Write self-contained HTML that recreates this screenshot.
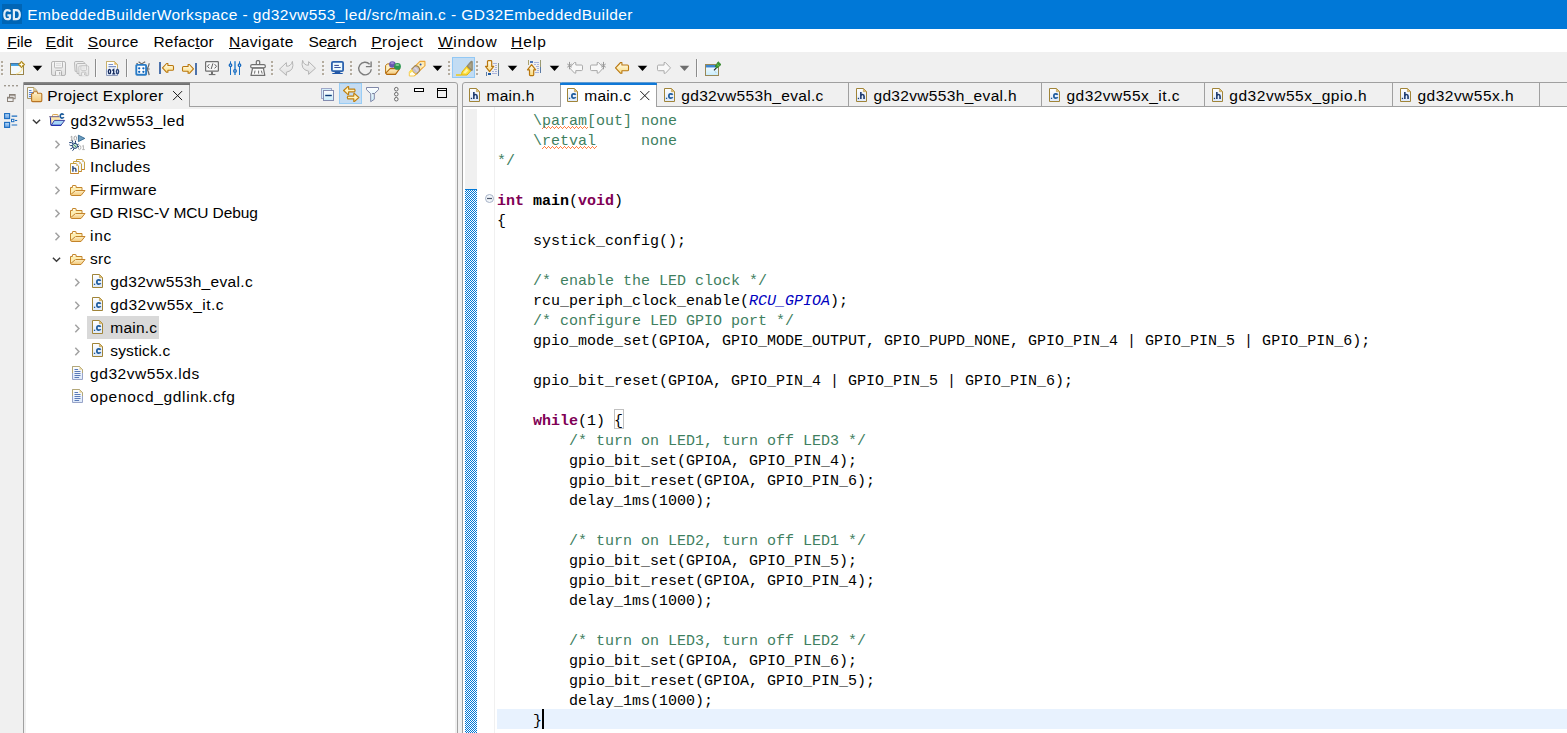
<!DOCTYPE html>
<html><head><meta charset="utf-8"><title>GD32EmbeddedBuilder</title>
<style>
html,body{margin:0;padding:0;overflow:hidden;}
body{width:1567px;height:733px;overflow:hidden;position:relative;background:#f0f0f0;font:16px "Liberation Sans",sans-serif;color:#000;}
.a{position:absolute;}
.t{position:absolute;white-space:pre;line-height:20px;height:20px;font:15.5px "Liberation Sans",sans-serif;}
.t u{text-decoration:underline;text-decoration-thickness:1px;text-underline-offset:0.5px;}
#titlebar{left:0;top:0;width:1567px;height:29px;background:#0078d7;}
#menubar{left:0;top:29px;width:1567px;height:23px;background:#fff;}
#toolbar{left:0;top:52px;width:1567px;height:30px;background:#f0f0f0;}
svg{position:absolute;overflow:visible;}
.code{position:absolute;left:497px;top:109px;margin:0;font:15px "Liberation Mono",monospace;line-height:20px;white-space:pre;color:#000;}
.code div{height:20px;}
.c{color:#3f7f5f;}
.k{color:#7f0055;font-weight:bold;}
.b{font-weight:bold;}
.m{color:#0000c0;font-style:italic;}
</style></head>
<body>
<div class="a" id="titlebar"></div>
<div class="a" id="menubar"></div>
<div class="a" id="toolbar"></div>

<div class="a" style="left:23px;top:82px;width:433px;height:660px;border:1px solid #a0a0a0;border-radius:0 3px 0 0"></div>
<div class="a" style="left:189px;top:106px;width:268px;height:1px;background:#a0a0a0"></div>
<div class="a" style="left:189px;top:84px;width:1px;height:23px;background:#a0a0a0"></div>
<div class="a" style="left:24px;top:82px;width:166px;height:3px;background:linear-gradient(#8c8c8c,#6a6a6a)"></div>
<div class="a" style="left:26px;top:109px;width:429px;height:624px;background:#fff"></div>
<div class="a" style="left:87px;top:316px;width:72px;height:23px;background:#d9d9d9"></div>
<div class="a" style="left:339px;top:83px;width:21px;height:19px;background:#c5dcf2;border:1px solid #99cdf5"></div>
<div class="a" style="left:462px;top:82px;width:1120px;height:660px;border:1px solid #a0a0a0;border-radius:3px 0 0 0"></div>
<div class="a" style="left:462px;top:106px;width:1105px;height:1px;background:#a0a0a0"></div>
<div class="a" style="left:463px;top:107px;width:1104px;height:626px;background:#fff"></div>
<div class="a" style="left:560px;top:82px;width:97px;height:25px;background:#fff;border-left:1px solid #a0a0a0;border-right:1px solid #a0a0a0;box-sizing:border-box"></div>
<div class="a" style="left:560px;top:82px;width:97px;height:3px;background:linear-gradient(#5f9ad0 0,#5f9ad0 1px,#0f78d7 1px);border-radius:2px 2px 0 0"></div>
<div class="a" style="left:848px;top:83px;width:1px;height:23px;background:#a0a0a0"></div>
<div class="a" style="left:1041px;top:83px;width:1px;height:23px;background:#a0a0a0"></div>
<div class="a" style="left:1204px;top:83px;width:1px;height:23px;background:#a0a0a0"></div>
<div class="a" style="left:1392px;top:83px;width:1px;height:23px;background:#a0a0a0"></div>
<div class="a" style="left:1539px;top:83px;width:1px;height:23px;background:#a0a0a0"></div>
<div class="a" style="left:465px;top:109px;width:12px;height:80px;background:#f0f0f0"></div>
<div class="a" style="left:465px;top:189px;width:12px;height:544px;background-color:#fff;background-image:conic-gradient(#0078d7 25%,#fff 0 50%,#0078d7 0 75%,#fff 0);background-size:2px 2px;background-position:0 1px"></div>
<div class="a" style="left:465px;top:189px;width:12px;height:1px;background:#0078d7"></div>
<div class="a" style="left:494px;top:107px;width:1px;height:626px;background:#f0f0f0"></div>
<div class="a" style="left:497px;top:709px;width:1070px;height:20px;background:#e8f2fe"></div>
<div class="a" style="left:542px;top:709px;width:2px;height:20px;background:#000"></div>
<div class="a" style="left:614px;top:409px;width:8px;height:18px;border:1px solid #c0c0c0"></div>
<svg class="a" style="left:0;top:0" width="1567" height="733" viewBox="0 0 1567 733"><defs>
<linearGradient id="gy" x1="0" y1="0" x2="0" y2="1"><stop offset="0" stop-color="#fffdf0"/><stop offset="1" stop-color="#fbdc80"/></linearGradient>
<linearGradient id="gf" x1="0" y1="0" x2="0" y2="1"><stop offset="0" stop-color="#fdf0c8"/><stop offset="1" stop-color="#f3c878"/></linearGradient>
<linearGradient id="gp" x1="0" y1="0" x2="0" y2="1"><stop offset="0" stop-color="#ffffff"/><stop offset="1" stop-color="#dde9fa"/></linearGradient>
<linearGradient id="gd" x1="0" y1="0" x2="0" y2="1"><stop offset="0" stop-color="#f6f6f6"/><stop offset="1" stop-color="#e0e0e0"/></linearGradient>
<linearGradient id="gc" x1="0" y1="0" x2="0" y2="1"><stop offset="0" stop-color="#ffffff"/><stop offset="1" stop-color="#c8ecfb"/></linearGradient>
<linearGradient id="gb" x1="0" y1="0" x2="0" y2="1"><stop offset="0" stop-color="#bcdcf8"/><stop offset="1" stop-color="#5f9be0"/></linearGradient>
</defs>
<rect x="2" y="4" width="20" height="20" fill="#0065b5"/>
<path d="M10.2 11.6 Q9.6 10.2 7.5 10.2 Q4.3 10.2 4.3 14.7 Q4.3 19.2 7.5 19.2 Q10 19.2 10 17.4 V15.4 H7.4" fill="none" stroke="#e2edf7" stroke-width="2.2"/>
<path d="M13.9 10.2 V19.2 H16 Q19.8 19.2 19.8 14.7 Q19.8 10.2 16 10.2 Z" fill="none" stroke="#e2edf7" stroke-width="2.2"/>
<rect x="1" y="61" width="2" height="2" fill="#b4ac9f"/>
<rect x="3" y="63" width="1" height="1" fill="#fafafa"/>
<rect x="1" y="65" width="2" height="2" fill="#b4ac9f"/>
<rect x="3" y="67" width="1" height="1" fill="#fafafa"/>
<rect x="1" y="69" width="2" height="2" fill="#b4ac9f"/>
<rect x="3" y="71" width="1" height="1" fill="#fafafa"/>
<rect x="1" y="73" width="2" height="2" fill="#b4ac9f"/>
<rect x="3" y="75" width="1" height="1" fill="#fafafa"/>
<rect x="271" y="61" width="2" height="2" fill="#b4ac9f"/>
<rect x="273" y="63" width="1" height="1" fill="#fafafa"/>
<rect x="271" y="65" width="2" height="2" fill="#b4ac9f"/>
<rect x="273" y="67" width="1" height="1" fill="#fafafa"/>
<rect x="271" y="69" width="2" height="2" fill="#b4ac9f"/>
<rect x="273" y="71" width="1" height="1" fill="#fafafa"/>
<rect x="271" y="73" width="2" height="2" fill="#b4ac9f"/>
<rect x="273" y="75" width="1" height="1" fill="#fafafa"/>
<rect x="322" y="61" width="2" height="2" fill="#b4ac9f"/>
<rect x="324" y="63" width="1" height="1" fill="#fafafa"/>
<rect x="322" y="65" width="2" height="2" fill="#b4ac9f"/>
<rect x="324" y="67" width="1" height="1" fill="#fafafa"/>
<rect x="322" y="69" width="2" height="2" fill="#b4ac9f"/>
<rect x="324" y="71" width="1" height="1" fill="#fafafa"/>
<rect x="322" y="73" width="2" height="2" fill="#b4ac9f"/>
<rect x="324" y="75" width="1" height="1" fill="#fafafa"/>
<rect x="350" y="61" width="2" height="2" fill="#b4ac9f"/>
<rect x="352" y="63" width="1" height="1" fill="#fafafa"/>
<rect x="350" y="65" width="2" height="2" fill="#b4ac9f"/>
<rect x="352" y="67" width="1" height="1" fill="#fafafa"/>
<rect x="350" y="69" width="2" height="2" fill="#b4ac9f"/>
<rect x="352" y="71" width="1" height="1" fill="#fafafa"/>
<rect x="350" y="73" width="2" height="2" fill="#b4ac9f"/>
<rect x="352" y="75" width="1" height="1" fill="#fafafa"/>
<rect x="378" y="61" width="2" height="2" fill="#b4ac9f"/>
<rect x="380" y="63" width="1" height="1" fill="#fafafa"/>
<rect x="378" y="65" width="2" height="2" fill="#b4ac9f"/>
<rect x="380" y="67" width="1" height="1" fill="#fafafa"/>
<rect x="378" y="69" width="2" height="2" fill="#b4ac9f"/>
<rect x="380" y="71" width="1" height="1" fill="#fafafa"/>
<rect x="378" y="73" width="2" height="2" fill="#b4ac9f"/>
<rect x="380" y="75" width="1" height="1" fill="#fafafa"/>
<rect x="448" y="61" width="2" height="2" fill="#b4ac9f"/>
<rect x="450" y="63" width="1" height="1" fill="#fafafa"/>
<rect x="448" y="65" width="2" height="2" fill="#b4ac9f"/>
<rect x="450" y="67" width="1" height="1" fill="#fafafa"/>
<rect x="448" y="69" width="2" height="2" fill="#b4ac9f"/>
<rect x="450" y="71" width="1" height="1" fill="#fafafa"/>
<rect x="448" y="73" width="2" height="2" fill="#b4ac9f"/>
<rect x="450" y="75" width="1" height="1" fill="#fafafa"/>
<rect x="476" y="61" width="2" height="2" fill="#b4ac9f"/>
<rect x="478" y="63" width="1" height="1" fill="#fafafa"/>
<rect x="476" y="65" width="2" height="2" fill="#b4ac9f"/>
<rect x="478" y="67" width="1" height="1" fill="#fafafa"/>
<rect x="476" y="69" width="2" height="2" fill="#b4ac9f"/>
<rect x="478" y="71" width="1" height="1" fill="#fafafa"/>
<rect x="476" y="73" width="2" height="2" fill="#b4ac9f"/>
<rect x="478" y="75" width="1" height="1" fill="#fafafa"/>
<rect x="95" y="59" width="1" height="18" fill="#8c8c8c"/>
<rect x="96" y="59" width="1" height="18" fill="#fafafa"/>
<rect x="126" y="59" width="1" height="18" fill="#8c8c8c"/>
<rect x="127" y="59" width="1" height="18" fill="#fafafa"/>
<rect x="696" y="59" width="1" height="18" fill="#8c8c8c"/>
<rect x="697" y="59" width="1" height="18" fill="#fafafa"/>
<path d="M32.699999999999996 65.8h9.6l-4.8 5.3z" fill="#000"/>
<path d="M432.7 65.8h9.6l-4.8 5.3z" fill="#000"/>
<path d="M507.7 65.8h9.6l-4.8 5.3z" fill="#000"/>
<path d="M549.6999999999999 65.8h9.6l-4.8 5.3z" fill="#000"/>
<path d="M637.6999999999999 65.8h9.6l-4.8 5.3z" fill="#000"/>
<path d="M679.6999999999999 65.8h9.6l-4.8 5.3z" fill="#6e6e6e"/>
<g transform="translate(10,61)"><rect x="0.5" y="2.5" width="13" height="11" fill="#f4fafd" stroke="#9a8448"/>
<rect x="1" y="3" width="9" height="2" fill="#45a4e4"/><rect x="0.5" y="2.2" width="9" height="1" fill="#2f74bc"/>
<path d="M6 13 Q11 12 12.5 7" fill="none" stroke="#fbe9a8" stroke-width="1.2"/>
<path d="M11.5 -0.2 L15.2 3.5 L11.5 7.2 L7.8 3.5Z" fill="#b08a1c"/>
<path d="M11.5 1 L12.3 2.7 L14 3.5 L12.3 4.3 L11.5 6 L10.7 4.3 L9 3.5 L10.7 2.7Z" fill="#fff8e0"/></g>
<g transform="translate(51,61)"><g transform="scale(1.0)"><rect x="0.5" y="0.5" width="14" height="14" rx="1.6" fill="url(#gd)" stroke="#b2b2b2"/>
<rect x="3.5" y="0.5" width="8" height="6.4" rx="1" fill="#f4f4f4" stroke="#b6b6b6"/>
<path d="M5 2.6h5M5 4.4h5" stroke="#d6d6d6" stroke-width="0.8"/>
<path d="M4.5 14.5v-4q0-1 1-1h4q1 0 1 1v4" fill="#f2f2f2" stroke="#b0b0b0"/>
<rect x="8" y="11" width="1.2" height="2.6" fill="#b8b8b8"/></g></g>
<g transform="translate(74,61)"><path d="M0.5 1.8q0-1.3 1.3-1.3h7.4l1.3 1.4v8.4h-9.4z" fill="#eeeeee" stroke="#b8b8b8"/>
<path d="M2.5 3.8q0-1.3 1.3-1.3h7.4l1.3 1.4v8.6h-9.4z" fill="#eeeeee" stroke="#b8b8b8"/></g>
<g transform="translate(78.5,65.5)"><g transform="scale(0.7)"><rect x="0.5" y="0.5" width="14" height="14" rx="1.6" fill="url(#gd)" stroke="#b2b2b2"/>
<rect x="3.5" y="0.5" width="8" height="6.4" rx="1" fill="#f4f4f4" stroke="#b6b6b6"/>
<path d="M5 2.6h5M5 4.4h5" stroke="#d6d6d6" stroke-width="0.8"/>
<path d="M4.5 14.5v-4q0-1 1-1h4q1 0 1 1v4" fill="#f2f2f2" stroke="#b0b0b0"/>
<rect x="8" y="11" width="1.2" height="2.6" fill="#b8b8b8"/></g></g>
<g transform="translate(106,61)"><path d="M0.5 0.5h8l3 3v11h-11z" fill="url(#gp)" stroke="#8f9cbc"/>
<path d="M0.5 8v-7.5h8l3 3v4" fill="none" stroke="#c8b06a"/>
<path d="M8.3 0.6v3.2h3.1z" fill="#e8b860"/>
<path d="M2.5 3.5h4.5" stroke="#7d93c8" stroke-width="1"/><path d="M2.5 5.7h7.5" stroke="#6079b4" stroke-width="1"/>
<ellipse cx="3.5" cy="10.6" rx="1.15" ry="2.1" fill="none" stroke="#14295c" stroke-width="1.3"/>
<path d="M6.2 9.6l1.5-1.1v4.4M6.3 12.9h2.9" fill="none" stroke="#14295c" stroke-width="1.3"/>
<ellipse cx="11.5" cy="10.6" rx="1.15" ry="2.1" fill="#c8d4e8" stroke="#2c4478" stroke-width="1.3"/></g>
<g transform="translate(135,61)"><path d="M3.6 0.7l3 2.2l3.6-2.2M1.4 2.6h1.4" stroke="#676767" stroke-width="1.1" fill="none"/>
<path d="M14.2 2.2q-0.4 3.2-1.8 5.4M12 8h2.6M12.4 8.6q1.2 2.2 1.8 5.6" stroke="#676767" stroke-width="1.2" fill="none"/>
<rect x="1.3" y="3.9" width="9.8" height="9.8" rx="0.8" fill="#fff" stroke="#2a7cc6" stroke-width="1.9"/>
<circle cx="4.2" cy="7.3" r="1.15" fill="#0a62bd"/><circle cx="8.4" cy="7.3" r="1.15" fill="#0a62bd"/>
<circle cx="4.2" cy="10.8" r="1.15" fill="#0a62bd"/><circle cx="8.4" cy="10.8" r="1.15" fill="#0a62bd"/></g>
<rect x="159" y="62" width="2" height="12" fill="#4c72ac"/>
<g transform="translate(162,63)"><path d="M0.5 4.90 L4.60 0.5 L5.90 0.5 L5.90 2.55 L10.40 2.55 Q11.50 2.55 11.50 3.65 L11.50 6.15 Q11.50 7.25 10.40 7.25 L5.90 7.25 L5.90 9.30 L4.60 9.30Z" fill="url(#gy)" stroke="#b9770e" stroke-width="1.1" stroke-linejoin="round"/></g>
<g transform="translate(194,64) scale(-1,1)"><path d="M0.5 4.90 L4.60 0.5 L5.90 0.5 L5.90 2.55 L10.40 2.55 Q11.50 2.55 11.50 3.65 L11.50 6.15 Q11.50 7.25 10.40 7.25 L5.90 7.25 L5.90 9.30 L4.60 9.30Z" fill="url(#gy)" stroke="#b9770e" stroke-width="1.1" stroke-linejoin="round"/></g>
<rect x="195" y="63" width="2" height="12" fill="#4c72ac"/>
<g transform="translate(205,61)"><rect x="0.6" y="0.6" width="12.8" height="9.6" rx="0.8" fill="#f7f7f7" stroke="#6f6f6f" stroke-width="1.2"/>
<path d="M4.3 3.2l-1.9 2.1l1.9 2.1M9.6 3.2l1.9 2.1l-1.9 2.1M7.9 2.4l-1.7 5.6" fill="none" stroke="#5f5f5f" stroke-width="1"/>
<rect x="6" y="10.6" width="2" height="2.6" fill="#6f6f6f"/><rect x="3.8" y="13" width="6.6" height="1.1" fill="#6f6f6f"/></g>
<g transform="translate(228,61)"><path d="M2.5 0.3v3M2.5 5.6v8.4" stroke="#1b6fc2" stroke-width="1"/>
<rect x="6.1" y="0.2" width="1.8" height="13.8" fill="#4f97d6"/>
<path d="M11.5 0.3v3M11.5 5.6v8.4" stroke="#1b6fc2" stroke-width="1"/>
<circle cx="2.5" cy="4.2" r="1.25" fill="#eaf3fc" stroke="#1467bd" stroke-width="1.3"/>
<circle cx="7" cy="9.9" r="1.3" fill="#eaf3fc" stroke="#1467bd" stroke-width="1.3"/>
<circle cx="11.5" cy="4.2" r="1.25" fill="#eaf3fc" stroke="#1467bd" stroke-width="1.3"/></g>
<g transform="translate(250,60)"><rect x="6.3" y="0.6" width="3.4" height="4" rx="1.2" fill="#f7f7f7" stroke="#707070" stroke-width="1.2"/>
<rect x="0.7" y="4.6" width="14.6" height="3.2" rx="1.4" fill="#fafafa" stroke="#707070" stroke-width="1.2"/>
<path d="M2.6 8.2h10.8l1.4 7.2h-13.8z" fill="#fafafa" stroke="#707070" stroke-width="1.2" stroke-linejoin="round"/>
<path d="M5 10.6l-0.5 3M8.6 10.6v3M11.3 10.6l0.9 3" stroke="#707070" stroke-width="1"/></g>
<g transform="translate(279,61)"><path d="M0.5 8.2 L7.4 1.6 V5.2 Q12 5.6 13.4 0.4 Q15.8 9.6 7.4 11.2 V14.4Z" fill="url(#gd)" stroke="#b4b4b4" stroke-width="1" stroke-linejoin="round"/></g>
<g transform="translate(316,60) scale(-1,1)"><path d="M0.5 8.2 L7.4 1.6 V5.2 Q12 5.6 13.4 0.4 Q15.8 9.6 7.4 11.2 V14.4Z" fill="url(#gd)" stroke="#b4b4b4" stroke-width="1" stroke-linejoin="round"/></g>
<g transform="translate(331,61)"><rect x="0.9" y="0.9" width="11.2" height="9.2" rx="1.2" fill="#eefbff" stroke="#2b62ae" stroke-width="1.8"/>
<path d="M3.3 4.4h4.6" stroke="#2c3f8a" stroke-width="1"/><path d="M3.3 6.5h6.4" stroke="#3b55a0" stroke-width="1"/>
<path d="M4.2 10.6h4.6l0.8 1.4h-6.2z" fill="#2458a4"/><rect x="1.2" y="11.9" width="10.6" height="1.1" rx="0.5" fill="#1f57a8"/></g>
<g transform="translate(358,61)"><path d="M13.3 8.2 A6.3 6.3 0 1 1 11.6 3.2" fill="none" stroke="#7c7c7c" stroke-width="1.4"/>
<path d="M13.1 0.4v5.2h-5.2" fill="none" stroke="#7c7c7c" stroke-width="1.4"/></g>
<g transform="translate(385,61)"><path d="M0.6 12.2v-7.6l1.7-1.7h4.2l1 1.4h2v4.4" fill="#fdf0c4" stroke="#b8730e" stroke-width="1"/>
<path d="M0.7 12.2l4.4-4.6h9.6l-4.2 5.8h-8.7l-1.1-1.2z" fill="url(#gf)" stroke="#b4690c" stroke-width="1.1" stroke-linejoin="round"/>
<circle cx="7.4" cy="3.5" r="3.3" fill="#6a55b0"/><ellipse cx="7.2" cy="2.2" rx="1.8" ry="1.1" fill="#9a8cd0"/>
<circle cx="12.5" cy="5.4" r="3.4" fill="#2c9650"/><ellipse cx="12.4" cy="4" rx="2" ry="1.1" fill="#86c890"/></g>
<g transform="translate(409,60)"><path d="M11.2 1.2 L15.9 1.4 L16 5.6 L10.4 10.8 L6.4 5.8Z" fill="#fde9ae" stroke="#eba538" stroke-width="1.1" stroke-linejoin="round"/>
<path d="M11.4 3.4l3 3" stroke="#fff4d0" stroke-width="1.6"/>
<circle cx="11.6" cy="4.5" r="1" fill="#2d56a0"/>
<path d="M6.2 5.6 Q10.6 5.8 10.8 10.6 L7.6 14.2 Q3.4 13.2 2.6 9.2Z" fill="#c6bfca" stroke="#a48446" stroke-width="1.1" stroke-linejoin="round"/>
<path d="M5.4 8q2.6 0.6 3.2 3.6" stroke="#ddd6e0" stroke-width="1.6" fill="none"/>
<path d="M2.6 9.4 Q3.6 12.8 7.4 14.2 L5.6 16 L0.3 16 L0.3 12.2Z" fill="#fffdf0" stroke="#f4c84c" stroke-width="1"/>
<path d="M0.8 12.6l2.2-2.2" stroke="#ffe44c" stroke-width="1.8"/>
<path d="M5.4 15.6l1.8-1.6" stroke="#f0a830" stroke-width="1"/></g>
<rect x="452.5" y="57.5" width="22" height="20" fill="#c2dcf3" stroke="#92c8f5"/>
<g transform="translate(455,60)"><path d="M11.6 6.4 L16 1.2 L17.3 1.4 L17.3 10.4 L15.6 10.8Z" fill="#948a6c" stroke="#8a8066" stroke-width="0.8"/>
<path d="M13 6l3.6-3.4v6.6z" fill="#aca488"/>
<path d="M7 12 L11.6 6.6 L15.6 11 L12 15 L6.6 15Z" fill="#fbe048" stroke="#e8b400" stroke-width="1"/>
<path d="M8.4 12.6l3.2-3.8l1.6 1.8l-2.8 3z" fill="#fff4a8"/>
<path d="M1 15h5.6" stroke="#f0c808" stroke-width="1.4"/></g>
<g transform="translate(485,60)"><rect x="13" y="3" width="1" height="13" fill="#8a947a"/><rect x="13" y="10" width="1" height="6" fill="#5a7aa4"/>
<path d="M8 3.5h4" stroke="#aab4dc" stroke-width="1"/><path d="M10 5.5h2" stroke="#aab4dc" stroke-width="1"/><path d="M10 7.5h2" stroke="#aab4dc" stroke-width="1"/><path d="M9 9.5h3" stroke="#aab4dc" stroke-width="1"/><path d="M7 11.5h2" stroke="#aab4dc" stroke-width="1"/><path d="M10 11.5h2" stroke="#aab4dc" stroke-width="1"/><path d="M7 13.5h5" stroke="#aab4dc" stroke-width="1"/>
<rect x="1" y="12" width="1" height="4" fill="#5a7aa4"/><rect x="3" y="13" width="3" height="2" fill="#1d5ba4"/>
<path d="M3.3 0.6h2.6q0.8 0 0.8 0.8v5h2l-4.1 5.2l-4.1-5.2h2v-5q0-0.8 0.8-0.8z" fill="url(#gy)" stroke="#b9770e" stroke-width="1.2" stroke-linejoin="round"/></g>
<g transform="translate(527,60)"><rect x="13" y="0" width="1" height="13" fill="#9a9a72"/><rect x="13" y="7" width="1" height="6" fill="#5a7aa4"/>
<rect x="1" y="0" width="1" height="5" fill="#a8a070"/><rect x="3" y="1" width="3" height="2" fill="#4f74b4"/>
<path d="M7 2.5h5" stroke="#aab4dc" stroke-width="1"/><path d="M7 4.5h2" stroke="#aab4dc" stroke-width="1"/><path d="M10 4.5h2" stroke="#aab4dc" stroke-width="1"/><path d="M9 6.5h3" stroke="#aab4dc" stroke-width="1"/><path d="M10 8.5h2" stroke="#aab4dc" stroke-width="1"/><path d="M10 10.5h2" stroke="#aab4dc" stroke-width="1"/><path d="M8 12.5h4" stroke="#aab4dc" stroke-width="1"/>
<path d="M3.3 15.6h2.6q0.8 0 0.8-0.8v-5h2l-4.1-5.2l-4.1 5.2h2v5q0 0.8 0.8 0.8z" fill="url(#gy)" stroke="#b9770e" stroke-width="1.2" stroke-linejoin="round"/></g>
<g transform="translate(569,62)"><path d="M0.5 5.80 L5.50 0.5 L6.80 0.5 L6.80 3.02 L12.40 3.02 Q13.50 3.02 13.50 4.12 L13.50 7.48 Q13.50 8.58 12.40 8.58 L6.80 8.58 L6.80 11.10 L5.50 11.10Z" fill="#f8f8f8" stroke="#a8a8a8" stroke-width="1" stroke-linejoin="round"/></g>
<path d="M569.5 61.89999999999999v7.4M567.3 63.99999999999999l4.4 3.2M571.7 63.99999999999999l-4.4 3.2" stroke="#9a9a9a" stroke-width="1" fill="none"/>
<g transform="translate(604,62) scale(-1,1)"><path d="M0.5 5.80 L5.50 0.5 L6.80 0.5 L6.80 3.02 L12.40 3.02 Q13.50 3.02 13.50 4.12 L13.50 7.48 Q13.50 8.58 12.40 8.58 L6.80 8.58 L6.80 11.10 L5.50 11.10Z" fill="#f8f8f8" stroke="#a8a8a8" stroke-width="1" stroke-linejoin="round"/></g>
<path d="M603.5 61.89999999999999v7.4M601.3 63.99999999999999l4.4 3.2M605.7 63.99999999999999l-4.4 3.2" stroke="#9a9a9a" stroke-width="1" fill="none"/>
<g transform="translate(615,62)"><path d="M0.5 5.90 L5.60 0.5 L6.90 0.5 L6.90 3.07 L12.40 3.07 Q13.50 3.07 13.50 4.17 L13.50 7.63 Q13.50 8.73 12.40 8.73 L6.90 8.73 L6.90 11.30 L5.60 11.30Z" fill="url(#gy)" stroke="#b9770e" stroke-width="1.1" stroke-linejoin="round"/></g>
<g transform="translate(671,62) scale(-1,1)"><path d="M0.5 5.90 L5.60 0.5 L6.90 0.5 L6.90 3.07 L12.40 3.07 Q13.50 3.07 13.50 4.17 L13.50 7.63 Q13.50 8.73 12.40 8.73 L6.90 8.73 L6.90 11.30 L5.60 11.30Z" fill="#f8f8f8" stroke="#ababab" stroke-width="1" stroke-linejoin="round"/></g>
<g transform="translate(705,61)"><rect x="0.5" y="3.5" width="13" height="11" fill="url(#gc)" stroke="#988858"/>
<rect x="1" y="4" width="12" height="2.2" fill="#3f86d0"/><rect x="1" y="6" width="12" height="1" fill="#9cc4ec"/>
<path d="M9 9.4l2.4-2.6" stroke="#222" stroke-width="1.2"/><path d="M10 10.4l1.4 1.4" stroke="#b8dcec" stroke-width="1.2"/>
<path d="M10.2 5.4 L13.2 0.8 L16 3.6 L12 7Z" fill="#3c9a30" stroke="#2a7a22" stroke-width="0.8"/>
<path d="M12 3.4l2 2" stroke="#8cd070" stroke-width="0.9"/></g>
<rect x="4" y="85" width="2" height="1.4" fill="#a09a90"/>
<rect x="8" y="85" width="2" height="1.4" fill="#a09a90"/>
<rect x="12" y="85" width="2" height="1.4" fill="#a09a90"/>
<rect x="16" y="85" width="2" height="1.4" fill="#a09a90"/>
<g transform="translate(7,94)"><rect x="2.5" y="0.5" width="5.6" height="4.2" fill="#f0f0f0" stroke="#8a8178" stroke-width="1"/><rect x="2.5" y="0.5" width="5.6" height="1.2" fill="#8a8178"/>
<rect x="0.5" y="3.3" width="5.6" height="4.2" fill="#f0f0f0" stroke="#8a8178" stroke-width="1"/><rect x="0.5" y="3.3" width="5.6" height="1.2" fill="#8a8178"/></g>
<g transform="translate(4,113)"><rect x="0.6" y="0.6" width="5" height="5" fill="url(#gb)" stroke="#1a6cc0" stroke-width="1.1"/>
<rect x="0.6" y="9.4" width="5" height="5" fill="url(#gb)" stroke="#1a6cc0" stroke-width="1.1"/>
<path d="M7.6 3.1h5.6M7.6 12h5.6" stroke="#1a6cc0" stroke-width="1.1"/>
<rect x="7.5" y="6.3" width="2.4" height="2.4" fill="#fff" stroke="#1a6cc0" stroke-width="1"/><path d="M11 7.5h2.2" stroke="#1a6cc0" stroke-width="1.1"/></g>
<g transform="translate(27,87)"><path d="M0.5 0.5h6.4l2.8 2.8v8.2h-9.2z" fill="url(#gp)" stroke="#a89868"/>
<path d="M6.6 0.8v2.8h2.8" fill="#e8d090" stroke="#c8b070" stroke-width="0.8"/>
<path d="M2 3.5h2.5M2 5.5h5M2 7.5h5M2 9.5h5" stroke="#5f86d0" stroke-width="1"/>
<path d="M4.6 7.2q0-1 1-1h0.8v-0.6q0-0.8 0.8-0.8h2.4q0.8 0 0.8 0.8v0.6h3.4q1 0 1 1v6.4q0 1-1 1h-8.2q-1 0-1-1z" fill="url(#gf)" stroke="#b87424" stroke-width="1.1"/>
<rect x="7" y="5.6" width="3" height="1.2" fill="#fff4d8"/></g>
<path d="M173.10000000000002 91.1l9 9M182.10000000000002 91.1l-9 9" stroke="#1a1a1a" stroke-width="1" fill="none"/>
<path d="M640.3 91.1l9 9M649.3 91.1l-9 9" stroke="#1a1a1a" stroke-width="1" fill="none"/>
<g transform="translate(321,88)"><rect x="0.5" y="0.5" width="10" height="10" fill="#d4effc" stroke="#a0a8c8"/>
<rect x="2.5" y="2.5" width="10" height="10" fill="url(#gc)" stroke="#848cb0"/>
<path d="M4.2 7.5h6.6" stroke="#0c3a78" stroke-width="1.4"/></g>
<g transform="translate(343,86)"><path d="M0.6 4.5 L4.8 0.6 L5.6 0.6 L5.6 3.1 L11.6 3.1 Q12.6 4.5 11.6 5.9 L5.6 5.9 L5.6 8.4 L4.8 8.4Z" fill="#fff3c0" stroke="#c08010" stroke-width="1.2" stroke-linejoin="round"/></g>
<g transform="translate(359.4,93) scale(-1,1)"><path d="M0.6 4.5 L4.8 0.6 L5.6 0.6 L5.6 3.1 L11.6 3.1 Q12.6 4.5 11.6 5.9 L5.6 5.9 L5.6 8.4 L4.8 8.4Z" fill="#fff3c0" stroke="#c08010" stroke-width="1.2" stroke-linejoin="round"/></g>
<g transform="translate(366,87)"><path d="M0.5 0.5h12v2.2l-4.2 4v5.6l-3.6 2.4v-8l-4.2-4z" fill="url(#gc)" stroke="#8088a8" stroke-linejoin="round"/>
<path d="M6.2 6.6h2" stroke="#6a7290" stroke-width="1"/></g>
<circle cx="396.3" cy="89.2" r="1.8" fill="#f6f6f6" stroke="#5a5a5a" stroke-width="0.9"/>
<circle cx="396.3" cy="94.2" r="1.8" fill="#f6f6f6" stroke="#5a5a5a" stroke-width="0.9"/>
<circle cx="396.3" cy="99.2" r="1.8" fill="#f6f6f6" stroke="#5a5a5a" stroke-width="0.9"/>
<rect x="414.5" y="88.5" width="9" height="3" fill="#fff" stroke="#000" stroke-width="1"/>
<rect x="437.5" y="88.5" width="9" height="9" fill="#f0f0f0" stroke="#000" stroke-width="1"/><path d="M437.5 90.5h9" stroke="#000"/><path d="M438.4 89.5h7.2" stroke="#fff" stroke-width="0.6"/>
<path d="M32.9 119.8l3.6 3.4l3.6-3.4" fill="none" stroke="#3c3c3c" stroke-width="1.5"/>
<path d="M55.5 140.79999999999998l3.6 3.7l-3.6 3.7" fill="none" stroke="#a2a2a2" stroke-width="1.5"/>
<path d="M55.5 163.79999999999998l3.6 3.7l-3.6 3.7" fill="none" stroke="#a2a2a2" stroke-width="1.5"/>
<path d="M55.5 186.79999999999998l3.6 3.7l-3.6 3.7" fill="none" stroke="#a2a2a2" stroke-width="1.5"/>
<path d="M55.5 209.79999999999998l3.6 3.7l-3.6 3.7" fill="none" stroke="#a2a2a2" stroke-width="1.5"/>
<path d="M55.5 232.79999999999998l3.6 3.7l-3.6 3.7" fill="none" stroke="#a2a2a2" stroke-width="1.5"/>
<path d="M52.9 257.8l3.6 3.4l3.6-3.4" fill="none" stroke="#3c3c3c" stroke-width="1.5"/>
<path d="M75.3 278.8l3.6 3.7l-3.6 3.7" fill="none" stroke="#a2a2a2" stroke-width="1.5"/>
<path d="M75.3 301.8l3.6 3.7l-3.6 3.7" fill="none" stroke="#a2a2a2" stroke-width="1.5"/>
<path d="M75.3 324.8l3.6 3.7l-3.6 3.7" fill="none" stroke="#a2a2a2" stroke-width="1.5"/>
<path d="M75.3 347.8l3.6 3.7l-3.6 3.7" fill="none" stroke="#a2a2a2" stroke-width="1.5"/>
<g transform="translate(70,185)"><path d="M0.5 9.7V2.5H2.4V1Q2.4 0.5 2.9 0.5H5.6Q6.1 0.5 6.1 1V2.5H11.7V5.6H5.4L1 10Z" fill="#fdeeb2" stroke="none"/>
<rect x="2.9" y="1" width="2.7" height="1.5" fill="#fffaea"/>
<path d="M0.5 9.7V2.5H2.4V1Q2.4 0.5 2.9 0.5H5.6Q6.1 0.5 6.1 1V2.5H12V5.4" fill="none" stroke="#c4842a" stroke-width="1"/>
<path d="M5.4 5.5H15L11 10.5H1.4L0.6 9.7L5 5.9" fill="url(#gf)" stroke="#c4842a" stroke-width="1" stroke-linejoin="round"/></g>
<g transform="translate(70,208)"><path d="M0.5 9.7V2.5H2.4V1Q2.4 0.5 2.9 0.5H5.6Q6.1 0.5 6.1 1V2.5H11.7V5.6H5.4L1 10Z" fill="#fdeeb2" stroke="none"/>
<rect x="2.9" y="1" width="2.7" height="1.5" fill="#fffaea"/>
<path d="M0.5 9.7V2.5H2.4V1Q2.4 0.5 2.9 0.5H5.6Q6.1 0.5 6.1 1V2.5H12V5.4" fill="none" stroke="#c4842a" stroke-width="1"/>
<path d="M5.4 5.5H15L11 10.5H1.4L0.6 9.7L5 5.9" fill="url(#gf)" stroke="#c4842a" stroke-width="1" stroke-linejoin="round"/></g>
<g transform="translate(70,231)"><path d="M0.5 9.7V2.5H2.4V1Q2.4 0.5 2.9 0.5H5.6Q6.1 0.5 6.1 1V2.5H11.7V5.6H5.4L1 10Z" fill="#fdeeb2" stroke="none"/>
<rect x="2.9" y="1" width="2.7" height="1.5" fill="#fffaea"/>
<path d="M0.5 9.7V2.5H2.4V1Q2.4 0.5 2.9 0.5H5.6Q6.1 0.5 6.1 1V2.5H12V5.4" fill="none" stroke="#c4842a" stroke-width="1"/>
<path d="M5.4 5.5H15L11 10.5H1.4L0.6 9.7L5 5.9" fill="url(#gf)" stroke="#c4842a" stroke-width="1" stroke-linejoin="round"/></g>
<g transform="translate(70,254)"><path d="M0.5 9.7V2.5H2.4V1Q2.4 0.5 2.9 0.5H5.6Q6.1 0.5 6.1 1V2.5H11.7V5.6H5.4L1 10Z" fill="#fdeeb2" stroke="none"/>
<rect x="2.9" y="1" width="2.7" height="1.5" fill="#fffaea"/>
<path d="M0.5 9.7V2.5H2.4V1Q2.4 0.5 2.9 0.5H5.6Q6.1 0.5 6.1 1V2.5H12V5.4" fill="none" stroke="#c4842a" stroke-width="1"/>
<path d="M5.4 5.5H15L11 10.5H1.4L0.6 9.7L5 5.9" fill="url(#gf)" stroke="#c4842a" stroke-width="1" stroke-linejoin="round"/></g>
<g transform="translate(92,274)"><path d="M0.5 0.5h7l3 3v10h-10z" fill="url(#gp)" stroke="#a08438"/>
<path d="M7.4 0.7v3h3z" fill="#e6c478" stroke="#b89848" stroke-width="0.6"/><rect x="1.9" y="9.7" width="1.3" height="1.3" fill="#1c5a9c"/><path d="M8.75 6.7 Q8 5.85 6.7 5.85 Q4.85 5.85 4.85 8 Q4.85 10.15 6.7 10.15 Q8 10.15 8.75 9.3" fill="none" stroke="#1c5a9c" stroke-width="1.7"/></g>
<g transform="translate(92,297)"><path d="M0.5 0.5h7l3 3v10h-10z" fill="url(#gp)" stroke="#a08438"/>
<path d="M7.4 0.7v3h3z" fill="#e6c478" stroke="#b89848" stroke-width="0.6"/><rect x="1.9" y="9.7" width="1.3" height="1.3" fill="#1c5a9c"/><path d="M8.75 6.7 Q8 5.85 6.7 5.85 Q4.85 5.85 4.85 8 Q4.85 10.15 6.7 10.15 Q8 10.15 8.75 9.3" fill="none" stroke="#1c5a9c" stroke-width="1.7"/></g>
<g transform="translate(92,320)"><path d="M0.5 0.5h7l3 3v10h-10z" fill="url(#gp)" stroke="#a08438"/>
<path d="M7.4 0.7v3h3z" fill="#e6c478" stroke="#b89848" stroke-width="0.6"/><rect x="1.9" y="9.7" width="1.3" height="1.3" fill="#1c5a9c"/><path d="M8.75 6.7 Q8 5.85 6.7 5.85 Q4.85 5.85 4.85 8 Q4.85 10.15 6.7 10.15 Q8 10.15 8.75 9.3" fill="none" stroke="#1c5a9c" stroke-width="1.7"/></g>
<g transform="translate(92,343)"><path d="M0.5 0.5h7l3 3v10h-10z" fill="url(#gp)" stroke="#a08438"/>
<path d="M7.4 0.7v3h3z" fill="#e6c478" stroke="#b89848" stroke-width="0.6"/><rect x="1.9" y="9.7" width="1.3" height="1.3" fill="#1c5a9c"/><path d="M8.75 6.7 Q8 5.85 6.7 5.85 Q4.85 5.85 4.85 8 Q4.85 10.15 6.7 10.15 Q8 10.15 8.75 9.3" fill="none" stroke="#1c5a9c" stroke-width="1.7"/></g>
<g transform="translate(72,366)"><path d="M0.5 0.5h7l3 3v10h-10z" fill="url(#gp)" stroke="#98a4c8"/>
<path d="M0.5 7v-6.5h7l3 3v3.5" fill="none" stroke="#b4a878"/>
<path d="M7.4 0.7v3h3z" fill="#e8d498"/>
<path d="M2.5 3.5h3.6M2.5 5.5h6M2.5 7.5h6M2.5 9.5h6M2.5 11.5h4.6" stroke="#5a7ab8" stroke-width="1"/></g>
<g transform="translate(72,389)"><path d="M0.5 0.5h7l3 3v10h-10z" fill="url(#gp)" stroke="#98a4c8"/>
<path d="M0.5 7v-6.5h7l3 3v3.5" fill="none" stroke="#b4a878"/>
<path d="M7.4 0.7v3h3z" fill="#e8d498"/>
<path d="M2.5 3.5h3.6M2.5 5.5h6M2.5 7.5h6M2.5 9.5h6M2.5 11.5h4.6" stroke="#5a7ab8" stroke-width="1"/></g>
<path d="M52.5 116.6v-1.4q0-0.7 0.7-0.7h4.2q0.7 0 0.7 0.7v1.4" fill="#fff8e8" stroke="#dca858" stroke-width="1"/>
<path d="M50.6 117h8.6l1.6 3.2h-7.4l-2.6 4.6z" fill="#fde6ac"/>
<path d="M49.2 116.7h10" stroke="#6c5c84" stroke-width="1"/>
<path d="M50.4 117.2l0.4 7.4l0.8 0.8" fill="none" stroke="#2a38a8" stroke-width="1.1"/>
<path d="M51.2 125.3l3.2-4.9h10.3l-3.8 4.9z" fill="#a6d6f8" stroke="#3a3e9c" stroke-width="1" stroke-linejoin="round"/>
<path d="M51.4 125.4h9.8" stroke="#2232b0" stroke-width="1.2"/>
<path d="M63.7 114.9 Q63 113.7 61.8 113.8 Q60.2 114 60.2 116 Q60.2 118 61.8 118.2 Q63 118.3 63.8 117.1" stroke="#1a5a9a" stroke-width="1.7" fill="none"/>
<g fill="none" stroke="#a4a4a4" stroke-width="1"><path d="M70.6 137l1.2-0.8v4.2M70.6 140.4h2.6"/><ellipse cx="75.3" cy="138.2" rx="1.3" ry="2.1"/></g>
<g fill="none" stroke="#b4b4b4" stroke-width="1"><ellipse cx="79.6" cy="147.5" rx="1.3" ry="2.1"/><path d="M82.2 146.2l1.2-0.8v4.2M82.2 149.6h2.6"/></g>
<path d="M78.4 135.2l6.4 3.2l-6.4 3.2z" fill="#6c9cbe" stroke="#2e648e" stroke-width="0.9" stroke-linejoin="round"/>
<path d="M69.2 142.6h2.2l1.6 1.4M69.4 144.8l1.2 0.8h1.6M70.4 148.8l1.6-0.6l0.8-1M72.4 150.6l1-0.6l0.4-1.6M72.2 140.6l0.4 1.6l1 1M75.6 141l-0.4 2M78.6 144.2l-1.4 0.6M79 146.6h-1.6" fill="none" stroke="#1e3f74" stroke-width="1"/>
<circle cx="75" cy="145.9" r="2.5" fill="#cfe9d6" stroke="#1e3f74" stroke-width="1"/>
<path d="M74 144.8l2 2.2" stroke="#4a9a6a" stroke-width="1"/>
<path d="M76.5 159.5h5.6l2.4 2.4v7.6h-8z" fill="#f6f9fe" stroke="#c8a040" stroke-width="1"/><path d="M76.5 169.5h8" stroke="#c4802c" stroke-width="1"/><path d="M82.2 159.8v2.2h2.2z" fill="#dcc080"/><path d="M73.5 161.5h5.6l2.4 2.4v7.6h-8z" fill="#f2f6fd" stroke="#c8a040" stroke-width="1"/><path d="M73.5 171.5h8" stroke="#c4802c" stroke-width="1"/><path d="M79.2 161.8v2.2h2.2z" fill="#dcc080"/><path d="M70.5 163.5h5.6l2.4 2.4v7.6h-8z" fill="#fbfcff" stroke="#c8a040" stroke-width="1"/><path d="M70.5 173.5h8" stroke="#c4802c" stroke-width="1"/><path d="M76.2 163.8v2.2h2.2z" fill="#dcc080"/>
<path d="M72.9 166v5.8M72.9 169.6q0.2-1.5 1.6-1.5q1.4 0 1.4 1.5v2.2" fill="none" stroke="#2c4a7c" stroke-width="1.4"/>
<g transform="translate(469,88)"><path d="M0.5 0.5h7l3 3v10h-10z" fill="url(#gp)" stroke="#a08438"/>
<path d="M7.4 0.7v3h3z" fill="#e6c478" stroke="#b89848" stroke-width="0.6"/><rect x="1.8" y="9.8" width="1.3" height="1.3" fill="#1c3a6e"/><path d="M4.85 4v7.1M4.85 8.2q0.1-1.7 1.7-1.7q1.5 0 1.5 1.7v2.9" fill="none" stroke="#1c3a6e" stroke-width="1.6"/></g>
<g transform="translate(567,88)"><path d="M0.5 0.5h7l3 3v10h-10z" fill="url(#gp)" stroke="#a08438"/>
<path d="M7.4 0.7v3h3z" fill="#e6c478" stroke="#b89848" stroke-width="0.6"/><rect x="1.9" y="9.7" width="1.3" height="1.3" fill="#1c5a9c"/><path d="M8.75 6.7 Q8 5.85 6.7 5.85 Q4.85 5.85 4.85 8 Q4.85 10.15 6.7 10.15 Q8 10.15 8.75 9.3" fill="none" stroke="#1c5a9c" stroke-width="1.7"/></g>
<g transform="translate(664,88)"><path d="M0.5 0.5h7l3 3v10h-10z" fill="url(#gp)" stroke="#a08438"/>
<path d="M7.4 0.7v3h3z" fill="#e6c478" stroke="#b89848" stroke-width="0.6"/><rect x="1.9" y="9.7" width="1.3" height="1.3" fill="#1c5a9c"/><path d="M8.75 6.7 Q8 5.85 6.7 5.85 Q4.85 5.85 4.85 8 Q4.85 10.15 6.7 10.15 Q8 10.15 8.75 9.3" fill="none" stroke="#1c5a9c" stroke-width="1.7"/></g>
<g transform="translate(856,88)"><path d="M0.5 0.5h7l3 3v10h-10z" fill="url(#gp)" stroke="#a08438"/>
<path d="M7.4 0.7v3h3z" fill="#e6c478" stroke="#b89848" stroke-width="0.6"/><rect x="1.8" y="9.8" width="1.3" height="1.3" fill="#1c3a6e"/><path d="M4.85 4v7.1M4.85 8.2q0.1-1.7 1.7-1.7q1.5 0 1.5 1.7v2.9" fill="none" stroke="#1c3a6e" stroke-width="1.6"/></g>
<g transform="translate(1049,88)"><path d="M0.5 0.5h7l3 3v10h-10z" fill="url(#gp)" stroke="#a08438"/>
<path d="M7.4 0.7v3h3z" fill="#e6c478" stroke="#b89848" stroke-width="0.6"/><rect x="1.9" y="9.7" width="1.3" height="1.3" fill="#1c5a9c"/><path d="M8.75 6.7 Q8 5.85 6.7 5.85 Q4.85 5.85 4.85 8 Q4.85 10.15 6.7 10.15 Q8 10.15 8.75 9.3" fill="none" stroke="#1c5a9c" stroke-width="1.7"/></g>
<g transform="translate(1212,88)"><path d="M0.5 0.5h7l3 3v10h-10z" fill="url(#gp)" stroke="#a08438"/>
<path d="M7.4 0.7v3h3z" fill="#e6c478" stroke="#b89848" stroke-width="0.6"/><rect x="1.8" y="9.8" width="1.3" height="1.3" fill="#1c3a6e"/><path d="M4.85 4v7.1M4.85 8.2q0.1-1.7 1.7-1.7q1.5 0 1.5 1.7v2.9" fill="none" stroke="#1c3a6e" stroke-width="1.6"/></g>
<g transform="translate(1400,88)"><path d="M0.5 0.5h7l3 3v10h-10z" fill="url(#gp)" stroke="#a08438"/>
<path d="M7.4 0.7v3h3z" fill="#e6c478" stroke="#b89848" stroke-width="0.6"/><rect x="1.8" y="9.8" width="1.3" height="1.3" fill="#1c3a6e"/><path d="M4.85 4v7.1M4.85 8.2q0.1-1.7 1.7-1.7q1.5 0 1.5 1.7v2.9" fill="none" stroke="#1c3a6e" stroke-width="1.6"/></g>
<circle cx="489.5" cy="198.5" r="4" fill="#f2f6fa" stroke="#a8b4c8" stroke-width="1"/><path d="M487 198.5h5" stroke="#4a5468" stroke-width="1.2"/>
<g fill="#ff7f40" shape-rendering="crispEdges"><rect x="542" y="128" width="1" height="1"/><rect x="543" y="127" width="1" height="1"/><rect x="544" y="126" width="1" height="1"/><rect x="545" y="127" width="1" height="1"/><rect x="546" y="128" width="1" height="1"/><rect x="547" y="127" width="1" height="1"/><rect x="548" y="126" width="1" height="1"/><rect x="549" y="127" width="1" height="1"/><rect x="550" y="128" width="1" height="1"/><rect x="551" y="127" width="1" height="1"/><rect x="552" y="126" width="1" height="1"/><rect x="553" y="127" width="1" height="1"/><rect x="554" y="128" width="1" height="1"/><rect x="555" y="127" width="1" height="1"/><rect x="556" y="126" width="1" height="1"/><rect x="557" y="127" width="1" height="1"/><rect x="558" y="128" width="1" height="1"/><rect x="559" y="127" width="1" height="1"/><rect x="560" y="126" width="1" height="1"/><rect x="561" y="127" width="1" height="1"/><rect x="562" y="128" width="1" height="1"/><rect x="563" y="127" width="1" height="1"/><rect x="564" y="126" width="1" height="1"/><rect x="565" y="127" width="1" height="1"/><rect x="566" y="128" width="1" height="1"/><rect x="567" y="127" width="1" height="1"/><rect x="568" y="126" width="1" height="1"/><rect x="569" y="127" width="1" height="1"/><rect x="570" y="128" width="1" height="1"/><rect x="571" y="127" width="1" height="1"/><rect x="572" y="126" width="1" height="1"/><rect x="573" y="127" width="1" height="1"/><rect x="574" y="128" width="1" height="1"/><rect x="575" y="127" width="1" height="1"/><rect x="576" y="126" width="1" height="1"/><rect x="577" y="127" width="1" height="1"/><rect x="578" y="128" width="1" height="1"/><rect x="579" y="127" width="1" height="1"/><rect x="580" y="126" width="1" height="1"/><rect x="581" y="127" width="1" height="1"/><rect x="582" y="128" width="1" height="1"/><rect x="583" y="127" width="1" height="1"/><rect x="584" y="126" width="1" height="1"/><rect x="585" y="127" width="1" height="1"/><rect x="586" y="128" width="1" height="1"/><rect x="587" y="127" width="1" height="1"/></g>
<g fill="#ff7f40" shape-rendering="crispEdges"><rect x="542" y="148" width="1" height="1"/><rect x="543" y="147" width="1" height="1"/><rect x="544" y="146" width="1" height="1"/><rect x="545" y="147" width="1" height="1"/><rect x="546" y="148" width="1" height="1"/><rect x="547" y="147" width="1" height="1"/><rect x="548" y="146" width="1" height="1"/><rect x="549" y="147" width="1" height="1"/><rect x="550" y="148" width="1" height="1"/><rect x="551" y="147" width="1" height="1"/><rect x="552" y="146" width="1" height="1"/><rect x="553" y="147" width="1" height="1"/><rect x="554" y="148" width="1" height="1"/><rect x="555" y="147" width="1" height="1"/><rect x="556" y="146" width="1" height="1"/><rect x="557" y="147" width="1" height="1"/><rect x="558" y="148" width="1" height="1"/><rect x="559" y="147" width="1" height="1"/><rect x="560" y="146" width="1" height="1"/><rect x="561" y="147" width="1" height="1"/><rect x="562" y="148" width="1" height="1"/><rect x="563" y="147" width="1" height="1"/><rect x="564" y="146" width="1" height="1"/><rect x="565" y="147" width="1" height="1"/><rect x="566" y="148" width="1" height="1"/><rect x="567" y="147" width="1" height="1"/><rect x="568" y="146" width="1" height="1"/><rect x="569" y="147" width="1" height="1"/><rect x="570" y="148" width="1" height="1"/><rect x="571" y="147" width="1" height="1"/><rect x="572" y="146" width="1" height="1"/><rect x="573" y="147" width="1" height="1"/><rect x="574" y="148" width="1" height="1"/><rect x="575" y="147" width="1" height="1"/><rect x="576" y="146" width="1" height="1"/><rect x="577" y="147" width="1" height="1"/><rect x="578" y="148" width="1" height="1"/><rect x="579" y="147" width="1" height="1"/><rect x="580" y="146" width="1" height="1"/><rect x="581" y="147" width="1" height="1"/><rect x="582" y="148" width="1" height="1"/><rect x="583" y="147" width="1" height="1"/><rect x="584" y="146" width="1" height="1"/><rect x="585" y="147" width="1" height="1"/><rect x="586" y="148" width="1" height="1"/><rect x="587" y="147" width="1" height="1"/><rect x="588" y="146" width="1" height="1"/><rect x="589" y="147" width="1" height="1"/><rect x="590" y="148" width="1" height="1"/><rect x="591" y="147" width="1" height="1"/><rect x="592" y="146" width="1" height="1"/><rect x="593" y="147" width="1" height="1"/><rect x="594" y="148" width="1" height="1"/><rect x="595" y="147" width="1" height="1"/><rect x="596" y="146" width="1" height="1"/></g></svg>
<div class="t" style="left:27.25px;top:5.5px;letter-spacing:0.417px;color:#fff">EmbeddedBuilderWorkspace - gd32vw553_led/src/main.c - GD32EmbeddedBuilder</div>
<div class="t" style="left:7.25px;top:32.5px;letter-spacing:0.033px;"><u>F</u>ile</div>
<div class="t" style="left:45.85px;top:32.5px;letter-spacing:0.167px;"><u>E</u>dit</div>
<div class="t" style="left:87.85px;top:32.5px;letter-spacing:0.280px;"><u>S</u>ource</div>
<div class="t" style="left:153.45px;top:32.5px;letter-spacing:0.243px;">Refac<u>t</u>or</div>
<div class="t" style="left:229.05px;top:32.5px;letter-spacing:0.457px;"><u>N</u>avigate</div>
<div class="t" style="left:308.55px;top:32.5px;letter-spacing:-0.140px;">Se<u>a</u>rch</div>
<div class="t" style="left:371.15px;top:32.5px;letter-spacing:0.567px;"><u>P</u>roject</div>
<div class="t" style="left:438.05px;top:32.5px;letter-spacing:0.680px;"><u>W</u>indow</div>
<div class="t" style="left:511.05px;top:32.5px;letter-spacing:0.967px;"><u>H</u>elp</div>
<div class="t" style="left:47.15px;top:86.5px;letter-spacing:0.387px;">Project Explorer</div>
<div class="t" style="left:70.45px;top:111.5px;letter-spacing:0.450px;">gd32vw553_led</div>
<div class="t" style="left:90.05px;top:134.5px;letter-spacing:-0.043px;">Binaries</div>
<div class="t" style="left:90.05px;top:157.5px;letter-spacing:0.357px;">Includes</div>
<div class="t" style="left:90.05px;top:180.5px;letter-spacing:0.286px;">Firmware</div>
<div class="t" style="left:90.05px;top:203.5px;letter-spacing:-0.106px;">GD RISC-V MCU Debug</div>
<div class="t" style="left:90.05px;top:226.5px;letter-spacing:0.750px;">inc</div>
<div class="t" style="left:90.05px;top:249.5px;letter-spacing:0.250px;">src</div>
<div class="t" style="left:110.25px;top:272.5px;letter-spacing:0.344px;">gd32vw553h_eval.c</div>
<div class="t" style="left:110.25px;top:295.5px;letter-spacing:0.500px;">gd32vw55x_it.c</div>
<div class="t" style="left:110.25px;top:318.5px;letter-spacing:0.240px;">main.c</div>
<div class="t" style="left:110.25px;top:341.5px;letter-spacing:0.175px;">systick.c</div>
<div class="t" style="left:90.05px;top:364.5px;letter-spacing:0.558px;">gd32vw55x.lds</div>
<div class="t" style="left:90.05px;top:387.5px;letter-spacing:0.665px;">openocd_gdlink.cfg</div>
<div class="t" style="left:486.55px;top:87.0px;letter-spacing:0.240px;">main.h</div>
<div class="t" style="left:584.35px;top:87.0px;letter-spacing:0.180px;">main.c</div>
<div class="t" style="left:681.35px;top:87.0px;letter-spacing:0.306px;">gd32vw553h_eval.c</div>
<div class="t" style="left:873.45px;top:87.0px;letter-spacing:0.331px;">gd32vw553h_eval.h</div>
<div class="t" style="left:1066.45px;top:87.0px;letter-spacing:0.485px;">gd32vw55x_it.c</div>
<div class="t" style="left:1229.25px;top:87.0px;letter-spacing:0.540px;">gd32vw55x_gpio.h</div>
<div class="t" style="left:1417.45px;top:87.0px;letter-spacing:0.490px;">gd32vw55x.h</div>
<div class="code" style="top:112px"><div><span class="c">    \param[out] none</span></div><div><span class="c">    \retval     none</span></div><div><span class="c">*/</span></div><div> </div><div><span class="k">int</span> <span class="b">main</span>(<span class="k">void</span>)</div><div>{</div><div>    systick_config();</div><div> </div><div><span class="c">    /* enable the LED clock */</span></div><div>    rcu_periph_clock_enable(<span class="m">RCU_GPIOA</span>);</div><div><span class="c">    /* configure LED GPIO port */</span></div><div>    gpio_mode_set(GPIOA, GPIO_MODE_OUTPUT, GPIO_PUPD_NONE, GPIO_PIN_4 | GPIO_PIN_5 | GPIO_PIN_6);</div><div> </div><div>    gpio_bit_reset(GPIOA, GPIO_PIN_4 | GPIO_PIN_5 | GPIO_PIN_6);</div><div> </div><div>    <span class="k">while</span>(1) {</div><div><span class="c">        /* turn on LED1, turn off LED3 */</span></div><div>        gpio_bit_set(GPIOA, GPIO_PIN_4);</div><div>        gpio_bit_reset(GPIOA, GPIO_PIN_6);</div><div>        delay_1ms(1000);</div><div> </div><div><span class="c">        /* turn on LED2, turn off LED1 */</span></div><div>        gpio_bit_set(GPIOA, GPIO_PIN_5);</div><div>        gpio_bit_reset(GPIOA, GPIO_PIN_4);</div><div>        delay_1ms(1000);</div><div> </div><div><span class="c">        /* turn on LED3, turn off LED2 */</span></div><div>        gpio_bit_set(GPIOA, GPIO_PIN_6);</div><div>        gpio_bit_reset(GPIOA, GPIO_PIN_5);</div><div>        delay_1ms(1000);</div><div>    }</div></div>
</body></html>
